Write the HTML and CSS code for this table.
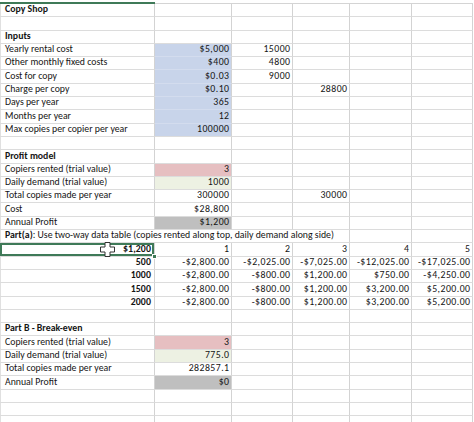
FILE: index.html
```html
<!DOCTYPE html>
<html>
<head>
<meta charset="utf-8">
<link rel="stylesheet" href="styles.css">
</head>
<body>
<div class="top"><div class="t tA"></div><div class="t"></div><div class="t"></div><div class="t"></div><div class="t"></div><div class="t"></div></div>
<div class="sheet">
  <div class="c b">Copy Shop</div><div class="c"></div><div class="c"></div><div class="c"></div><div class="c"></div><div class="c"></div>
  <div class="c"></div><div class="c"></div><div class="c"></div><div class="c"></div><div class="c"></div><div class="c"></div>
  <div class="c b">Inputs</div><div class="c"></div><div class="c"></div><div class="c"></div><div class="c"></div><div class="c"></div>
  <div class="c">Yearly rental cost</div><div class="c r blue">$5,000</div><div class="c r">15000</div><div class="c"></div><div class="c"></div><div class="c"></div>
  <div class="c">Other monthly fixed costs</div><div class="c r blue">$400</div><div class="c r">4800</div><div class="c"></div><div class="c"></div><div class="c"></div>
  <div class="c">Cost for copy</div><div class="c r blue">$0.03</div><div class="c r">9000</div><div class="c"></div><div class="c"></div><div class="c"></div>
  <div class="c">Charge per copy</div><div class="c r blue">$0.10</div><div class="c"></div><div class="c r">28800</div><div class="c"></div><div class="c"></div>
  <div class="c">Days per year</div><div class="c r blue">365</div><div class="c"></div><div class="c"></div><div class="c"></div><div class="c"></div>
  <div class="c">Months per year</div><div class="c r blue">12</div><div class="c"></div><div class="c"></div><div class="c"></div><div class="c"></div>
  <div class="c">Max copies per copier per year</div><div class="c r blue last">100000</div><div class="c"></div><div class="c"></div><div class="c"></div><div class="c"></div>
  <div class="c"></div><div class="c"></div><div class="c"></div><div class="c"></div><div class="c"></div><div class="c"></div>
  <div class="c b">Profit model</div><div class="c"></div><div class="c"></div><div class="c"></div><div class="c"></div><div class="c"></div>
  <div class="c">Copiers rented (trial value)</div><div class="c r pink">3</div><div class="c"></div><div class="c"></div><div class="c"></div><div class="c"></div>
  <div class="c">Daily demand (trial value)</div><div class="c r green">1000</div><div class="c"></div><div class="c"></div><div class="c"></div><div class="c"></div>
  <div class="c">Total copies made per year</div><div class="c r">300000</div><div class="c"></div><div class="c r">30000</div><div class="c"></div><div class="c"></div>
  <div class="c">Cost</div><div class="c r">$28,800</div><div class="c"></div><div class="c"></div><div class="c"></div><div class="c"></div>
  <div class="c">Annual Profit</div><div class="c r gray">$1,200</div><div class="c"></div><div class="c"></div><div class="c"></div><div class="c"></div>
  <div class="c span4"><b>Part(a)</b>: Use two-way data table (copies rented along top, daily demand along side)</div><div class="c"></div><div class="c"></div>
  <div class="c r b sel">$1,200<svg class="cursor" width="15" height="15" viewBox="0 0 15 15"><path d="M5 0.5h5v4.5h4.5v5h-4.5v4.5h-5v-4.5h-4.5v-5h4.5z" fill="#fff" stroke="#333" stroke-width="1"/></svg></div><div class="c r">1</div><div class="c r">2</div><div class="c r">3</div><div class="c r">4</div><div class="c r">5</div>
  <div class="c r b">500</div><div class="c r">-$2,800.00</div><div class="c r">-$2,025.00</div><div class="c r">-$7,025.00</div><div class="c r">-$12,025.00</div><div class="c r">-$17,025.00</div>
  <div class="c r b">1000</div><div class="c r">-$2,800.00</div><div class="c r">-$800.00</div><div class="c r">$1,200.00</div><div class="c r">$750.00</div><div class="c r">-$4,250.00</div>
  <div class="c r b">1500</div><div class="c r">-$2,800.00</div><div class="c r">-$800.00</div><div class="c r">$1,200.00</div><div class="c r">$3,200.00</div><div class="c r">$5,200.00</div>
  <div class="c r b">2000</div><div class="c r">-$2,800.00</div><div class="c r">-$800.00</div><div class="c r">$1,200.00</div><div class="c r">$3,200.00</div><div class="c r">$5,200.00</div>
  <div class="c"></div><div class="c"></div><div class="c"></div><div class="c"></div><div class="c"></div><div class="c"></div>
  <div class="c b">Part B - Break-even</div><div class="c"></div><div class="c"></div><div class="c"></div><div class="c"></div><div class="c"></div>
  <div class="c">Copiers rented (trial value)</div><div class="c r pink">3</div><div class="c"></div><div class="c"></div><div class="c"></div><div class="c"></div>
  <div class="c">Daily demand (trial value)</div><div class="c r green">775.0</div><div class="c"></div><div class="c"></div><div class="c"></div><div class="c"></div>
  <div class="c">Total copies made per year</div><div class="c r">282857.1</div><div class="c"></div><div class="c"></div><div class="c"></div><div class="c"></div>
  <div class="c">Annual Profit</div><div class="c r gray">$0</div><div class="c"></div><div class="c"></div><div class="c"></div><div class="c"></div>
  <div class="c"></div><div class="c"></div><div class="c"></div><div class="c"></div><div class="c"></div><div class="c"></div>
  <div class="c"></div><div class="c"></div><div class="c"></div><div class="c"></div><div class="c"></div><div class="c"></div>
  <div class="c"></div><div class="c"></div><div class="c"></div><div class="c"></div><div class="c"></div><div class="c"></div>
</div>
</body>
</html>
```
FILE: styles.css
```css
html, body {
  margin: 0;
  padding: 0;
  background: #ffffff;
  overflow: hidden;
}
body {
  font-family: Carlito, Calibri, Lato, "Liberation Sans", sans-serif;
  font-size: 9.8px;
  color: #141414;
}
.top {
  display: grid;
  grid-template-columns: 155px 77px 61px 57px 62px 61px;
  height: 4px;
  width: 473px;
}
.t {
  box-sizing: border-box;
  border-bottom: 1px solid #d4d4d4;
}
.tA {
  border-bottom: 2px solid #3f7a58;
}
.sheet {
  display: grid;
  grid-template-columns: 155px 77px 61px 57px 62px 61px;
  grid-auto-rows: 13.3px;
  width: 473px;
  box-shadow: inset 1px 0 0 #e0e0e0;
}
.c {
  box-sizing: border-box;
  border-right: 1px solid #d3d3d3;
  border-bottom: 1px solid #dcdcdc;
  display: flex;
  align-items: flex-end;
  padding: 0 2px 1px 5px;
  line-height: 11px;
  white-space: nowrap;
  min-width: 0;
}
.r {
  justify-content: flex-end;
  padding-left: 0;
  letter-spacing: 0.45px;
  padding-right: 1.5px;
}
.b {
  font-weight: 700;
}
.r.b {
  letter-spacing: 0.1px;
  padding-right: 3px;
}
.span4 {
  grid-column: span 4;
}
.blue {
  background: #c8d4ea;
  border-bottom-color: #d3dcee;
}
.blue.last {
  border-bottom-color: #dcdcdc;
}
.pink {
  background: #e6bfc1;
}
.green {
  background: #edf1e3;
}
.gray {
  background: #bfbfbf;
}
.sel {
  position: relative;
  box-shadow: inset 0 0 0 2px #3f7a58;
}
.sel::after {
  content: "";
  position: absolute;
  right: -3px;
  bottom: -3px;
  width: 5px;
  height: 5px;
  background: #3f7a58;
  border: 1px solid #fff;
  box-sizing: border-box;
}
.cursor {
  position: absolute;
  left: 100px;
  top: -1px;
}
```
